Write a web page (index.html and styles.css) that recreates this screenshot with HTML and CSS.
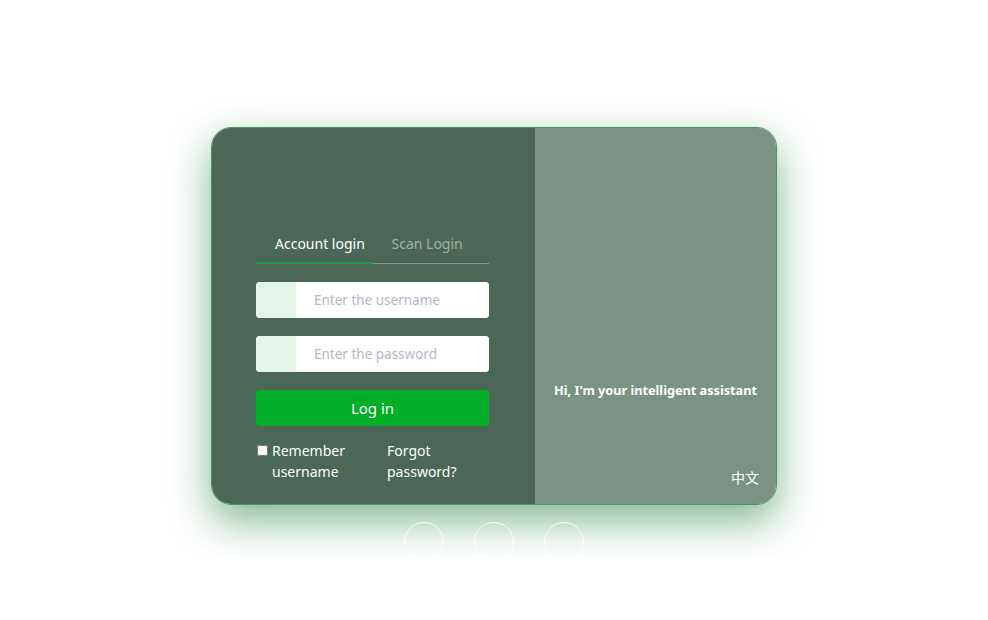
FILE: index.html
```html
<!DOCTYPE html>
<html lang="en">
<head>
<meta charset="utf-8">
<title>Login</title>
<link rel="stylesheet" href="styles.css">
</head>
<body>
<div class="page">
  <div class="card">
    <div class="left">
      <div class="tabs">
        <div class="tab active">Account login</div>
        <div class="tab">Scan Login</div>
      </div>
      <div class="field"><span class="prefix"></span><input type="text" placeholder="Enter the username"></div>
      <div class="field"><span class="prefix"></span><input type="password" placeholder="Enter the password"></div>
      <button class="login">Log in</button>
      <div class="options">
        <label class="remember"><input type="checkbox"><span>Remember username</span></label>
        <a class="forgot">Forgot password?</a>
      </div>
    </div>
    <div class="right">
      <div class="hello">Hi, I'm your intelligent assistant</div>
      <div class="lang">中文</div>
    </div>
  </div>
  <div class="dots">
    <span class="dot"></span><span class="dot"></span><span class="dot"></span>
  </div>
</div>
</body>
</html>
```
FILE: styles.css
```css
html, body {
  margin: 0;
  padding: 0;
  background: #fff;
  font-family: "Noto Sans", "Noto Sans CJK SC", sans-serif;
}
.page {
  display: flex;
  flex-direction: column;
  align-items: center;
  padding-top: 127px;
}
.card {
  width: 566px;
  height: 378px;
  box-sizing: border-box;
  border: 1px solid #3f9a5e;
  border-radius: 20px;
  overflow: hidden;
  display: flex;
  box-shadow: 0 16px 40px rgba(45, 135, 75, 0.6);
}
.left {
  width: 323px;
  background: #4a6757;
  padding: 102px 46px 0 44px;
  box-sizing: border-box;
  display: flex;
  flex-direction: column;
}
.tabs {
  display: flex;
  border-bottom: 1px solid #7f9688;
  height: 33px;
}
.tab {
  width: 117px;
  box-sizing: border-box;
  padding-left: 19px;
  font-size: 14px;
  line-height: 28px;
  color: #9fb1a6;
}
.tab.active {
  color: #fff;
  border-bottom: 2px solid #1f9a4a;
  margin-bottom: -1px;
}
.field {
  margin-top: 18px;
  height: 36px;
  background: #fff;
  border-radius: 4px;
  display: flex;
  overflow: hidden;
}
.prefix {
  width: 40px;
  background: #e6f5ea;
}
.field input {
  flex: 1;
  border: 0;
  outline: 0;
  padding: 0 0 0 18px;
  font-family: inherit;
  font-size: 13.5px;
  color: #333;
  background: #fff;
  min-width: 0;
}
.field input::placeholder { color: #b4b8c4; }
.login {
  margin-top: 18px;
  height: 36px;
  border: 0;
  border-radius: 4px;
  background: #00af26;
  color: #fff;
  font-family: inherit;
  font-size: 15px;
}
.options {
  margin-top: 14px;
  display: flex;
  color: #fff;
  font-size: 14px;
  line-height: 21px;
}
.remember {
  display: flex;
  align-items: flex-start;
  width: 131px;
}
.remember input {
  margin: 5px 4px 0 1px;
  width: 11px;
  height: 11px;
}
.remember span { width: 80px; }
.forgot { width: 80px; color: #fff; }
.right {
  flex: 1;
  background: #7b9385;
  position: relative;
  display: flex;
  flex-direction: column;
  align-items: center;
}
.hello {
  margin-top: 253px;
  color: #fff;
  font-weight: bold;
  font-size: 12.7px;
}
.lang {
  position: absolute;
  right: 17px;
  bottom: 17px;
  color: #fff;
  font-size: 14px;
}
.dots {
  margin-top: 17px;
  height: 36px;
  overflow: hidden;
  display: flex;
  gap: 30px;
}
.dot {
  width: 38px;
  height: 38px;
  border: 1px solid rgba(255,255,255,0.9);
  border-radius: 50%;
}
```
